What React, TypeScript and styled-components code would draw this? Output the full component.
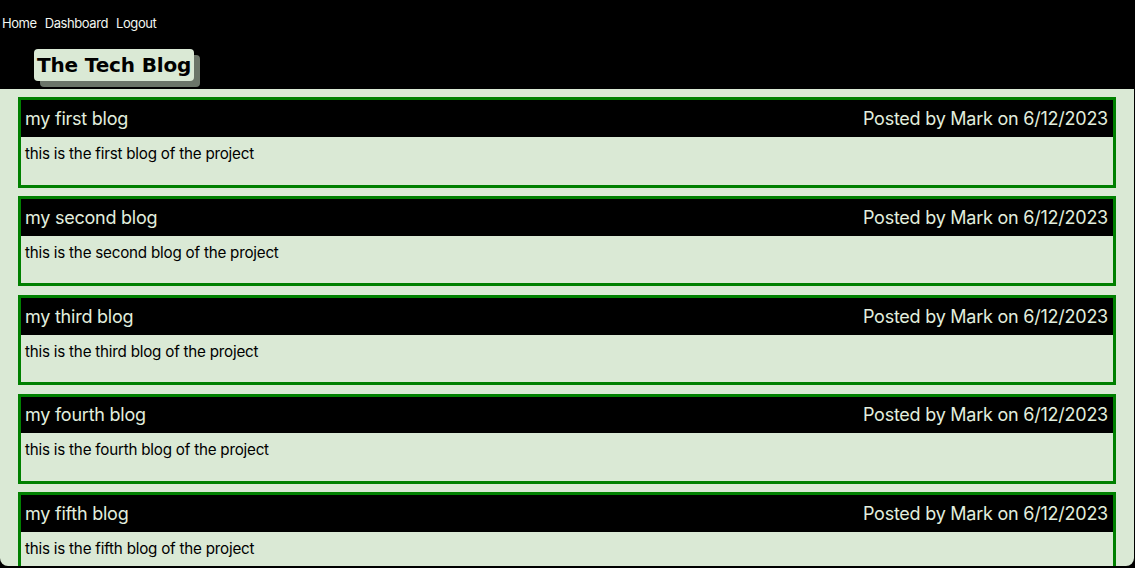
import React from "react";
import styled, { createGlobalStyle } from "styled-components";

const Global = createGlobalStyle`
  html, body { margin: 0; padding: 0; background: #000; height: 100%; overflow: hidden; }
  body { font-family: Inter, "Liberation Sans", sans-serif; }
`;

const Page = styled.div`
  width: 1134px;
  height: 566px;
  background: #dae9d5;
  border-radius: 0 0 8px 8px;
  overflow: hidden;
`;

const Header = styled.header`
  background: #000;
  height: 89px;
  display: flex;
  flex-direction: column;
`;

const Nav = styled.nav`
  display: flex;
  gap: 8px;
  padding: 15px 0 0 2px;
  height: 33px;
  box-sizing: border-box;
`;

const NavLink = styled.a`
  color: #f2f6f0;
  font-size: 13px;
  letter-spacing: -0.42px;
  line-height: 16px;
`;

const Logo = styled.h1`
  align-self: flex-start;
  box-sizing: border-box;
  width: 160px;
  margin: 16px 0 0 34px;
  height: 32px;
  padding: 0 3px;
  background: #dae9d5;
  color: #000;
  border-radius: 4px;
  box-shadow: 6px 6px 0 #6b7569;
  font-family: "DejaVu Sans", sans-serif;
  font-weight: 700;
  font-size: 20px;
  letter-spacing: -0.15px;
  white-space: nowrap;
  line-height: 32px;
`;

const List = styled.main`
  display: flex;
  flex-direction: column;
  gap: 8.4px;
  padding: 8.2px 18px 0;
`;

const Card = styled.article`
  flex: none;
  height: 90.4px;
  border: 3px solid #008000;
  box-sizing: border-box;
`;

const CardHead = styled.div`
  display: flex;
  justify-content: space-between;
  align-items: center;
  height: 36.8px;
  padding: 0 5px 0 4px;
  box-sizing: border-box;
  background: #000;
  color: #e2eede;
  font-size: 18px;
  letter-spacing: -0.24px;
`;

const CardBody = styled.p`
  margin: 0;
  padding: 7px 4px;
  color: #000;
  font-size: 15.2px;
  letter-spacing: -0.22px;
  line-height: 20px;
`;

const posts = ["first", "second", "third", "fourth", "fifth"];

export default function App() {
  return (
    <Page>
      <Global />
      <Header>
        <Nav>
          <NavLink>Home</NavLink>
          <NavLink>Dashboard</NavLink>
          <NavLink>Logout</NavLink>
        </Nav>
        <Logo>The Tech Blog</Logo>
      </Header>
      <List>
        {posts.map((p) => (
          <Card key={p}>
            <CardHead>
              <span>my {p} blog</span>
              <span>Posted by Mark on 6/12/2023</span>
            </CardHead>
            <CardBody>this is the {p} blog of the project</CardBody>
          </Card>
        ))}
      </List>
    </Page>
  );
}
